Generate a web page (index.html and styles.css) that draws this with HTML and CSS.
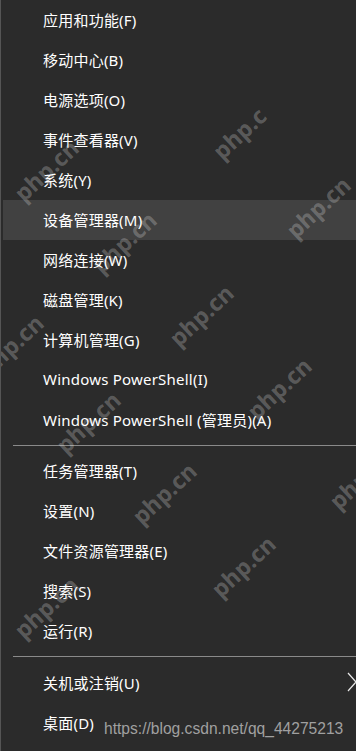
FILE: index.html
```html
<!DOCTYPE html>
<html lang="zh-CN">
<head>
<meta charset="utf-8">
<title>Win+X</title>
<link rel="stylesheet" href="styles.css">
</head>
<body>
<div class="menu">
  <div class="item">应用和功能(F)</div>
  <div class="item">移动中心(B)</div>
  <div class="item">电源选项(O)</div>
  <div class="item">事件查看器(V)</div>
  <div class="item">系统(Y)</div>
  <div class="item active">设备管理器(M)</div>
  <div class="item">网络连接(W)</div>
  <div class="item">磁盘管理(K)</div>
  <div class="item">计算机管理(G)</div>
  <div class="item">Windows PowerShell(I)</div>
  <div class="item">Windows PowerShell (管理员)(A)</div>
  <div class="sep"></div>
  <div class="item">任务管理器(T)</div>
  <div class="item">设置(N)</div>
  <div class="item">文件资源管理器(E)</div>
  <div class="item">搜索(S)</div>
  <div class="item">运行(R)</div>
  <div class="sep sep2"></div>
  <div class="item">关机或注销(U)
    <svg class="chev" width="10" height="22" viewBox="0 0 10 22"><polyline points="1,2 9,11 1,20" fill="none" stroke="#e8e8e8" stroke-width="1.2"/></svg>
  </div>
  <div class="item">桌面(D)</div>
</div>
<span class="wm wm1">php.c</span>
<span class="wm wm2">php.cn</span>
<span class="wm wm3">php.cn</span>
<span class="wm wm4">php.cn</span>
<span class="wm wm5">php.cn</span>
<span class="wm wm6">php.cn</span>
<span class="wm wm7">php.cn</span>
<span class="wm wm8">php.cn</span>
<span class="wm wm9">php.cn</span>
<span class="wm wm10">php.cn</span>
<span class="wm wm11">php.cn</span>
<span class="wm wm12">php.cn</span>
<div class="url">https://blog.csdn.net/qq_44275213</div>
</body>
</html>
```
FILE: styles.css
```css
html, body {
  margin: 0;
  padding: 0;
  background: #2b2b2b;
  height: 751px;
  overflow: hidden;
}
body {
  position: relative;
  font-family: "Noto Sans", "Noto Sans CJK SC", sans-serif;
  color: #ffffff;
  border-left: 1px solid #555555;
  box-sizing: border-box;
}
.menu {
  display: flex;
  flex-direction: column;
  padding-left: 2px;
}
.item {
  height: 40px;
  box-sizing: border-box;
  display: flex;
  align-items: center;
  padding-left: 40px;
  padding-bottom: 2px;
  font-size: 15px;
  letter-spacing: 0.22px;
  white-space: nowrap;
}
.item.active {
  background: #414141;
}
.sep {
  height: 1px;
  background: #8a8a8a;
  margin: 5px 0 5px 10px;
}
.sep2 {
  margin-bottom: 6px;
}
.chev {
  margin-left: auto;
  margin-right: -1px;
}
.wm {
  position: absolute;
  transform: translate(-50%, -50%) rotate(-43deg);
  font-family: "Open Sans", sans-serif;
  font-weight: 700;
  font-size: 23px;
  color: rgba(255, 255, 255, 0.24);
  white-space: nowrap;
  pointer-events: none;
}
.wm1 { left: 238px; top: 133px; }
.wm2 { left: 45px; top: 170px; }
.wm3 { left: 317px; top: 207px; }
.wm4 { left: 123px; top: 242px; }
.wm5 { left: 200px; top: 315px; }
.wm6 { left: 10px; top: 345px; }
.wm7 { left: 278px; top: 388px; }
.wm8 { left: 87px; top: 422px; }
.wm9 { left: 360px; top: 478px; }
.wm10 { left: 163px; top: 493px; }
.wm11 { left: 242px; top: 566px; }
.wm12 { left: 45px; top: 607px; }
.url {
  position: absolute;
  left: 103px;
  top: 720px;
  font-family: "Liberation Sans", Arial, sans-serif;
  font-size: 15.6px;
  color: #a0a0a0;
  white-space: nowrap;
}
```
